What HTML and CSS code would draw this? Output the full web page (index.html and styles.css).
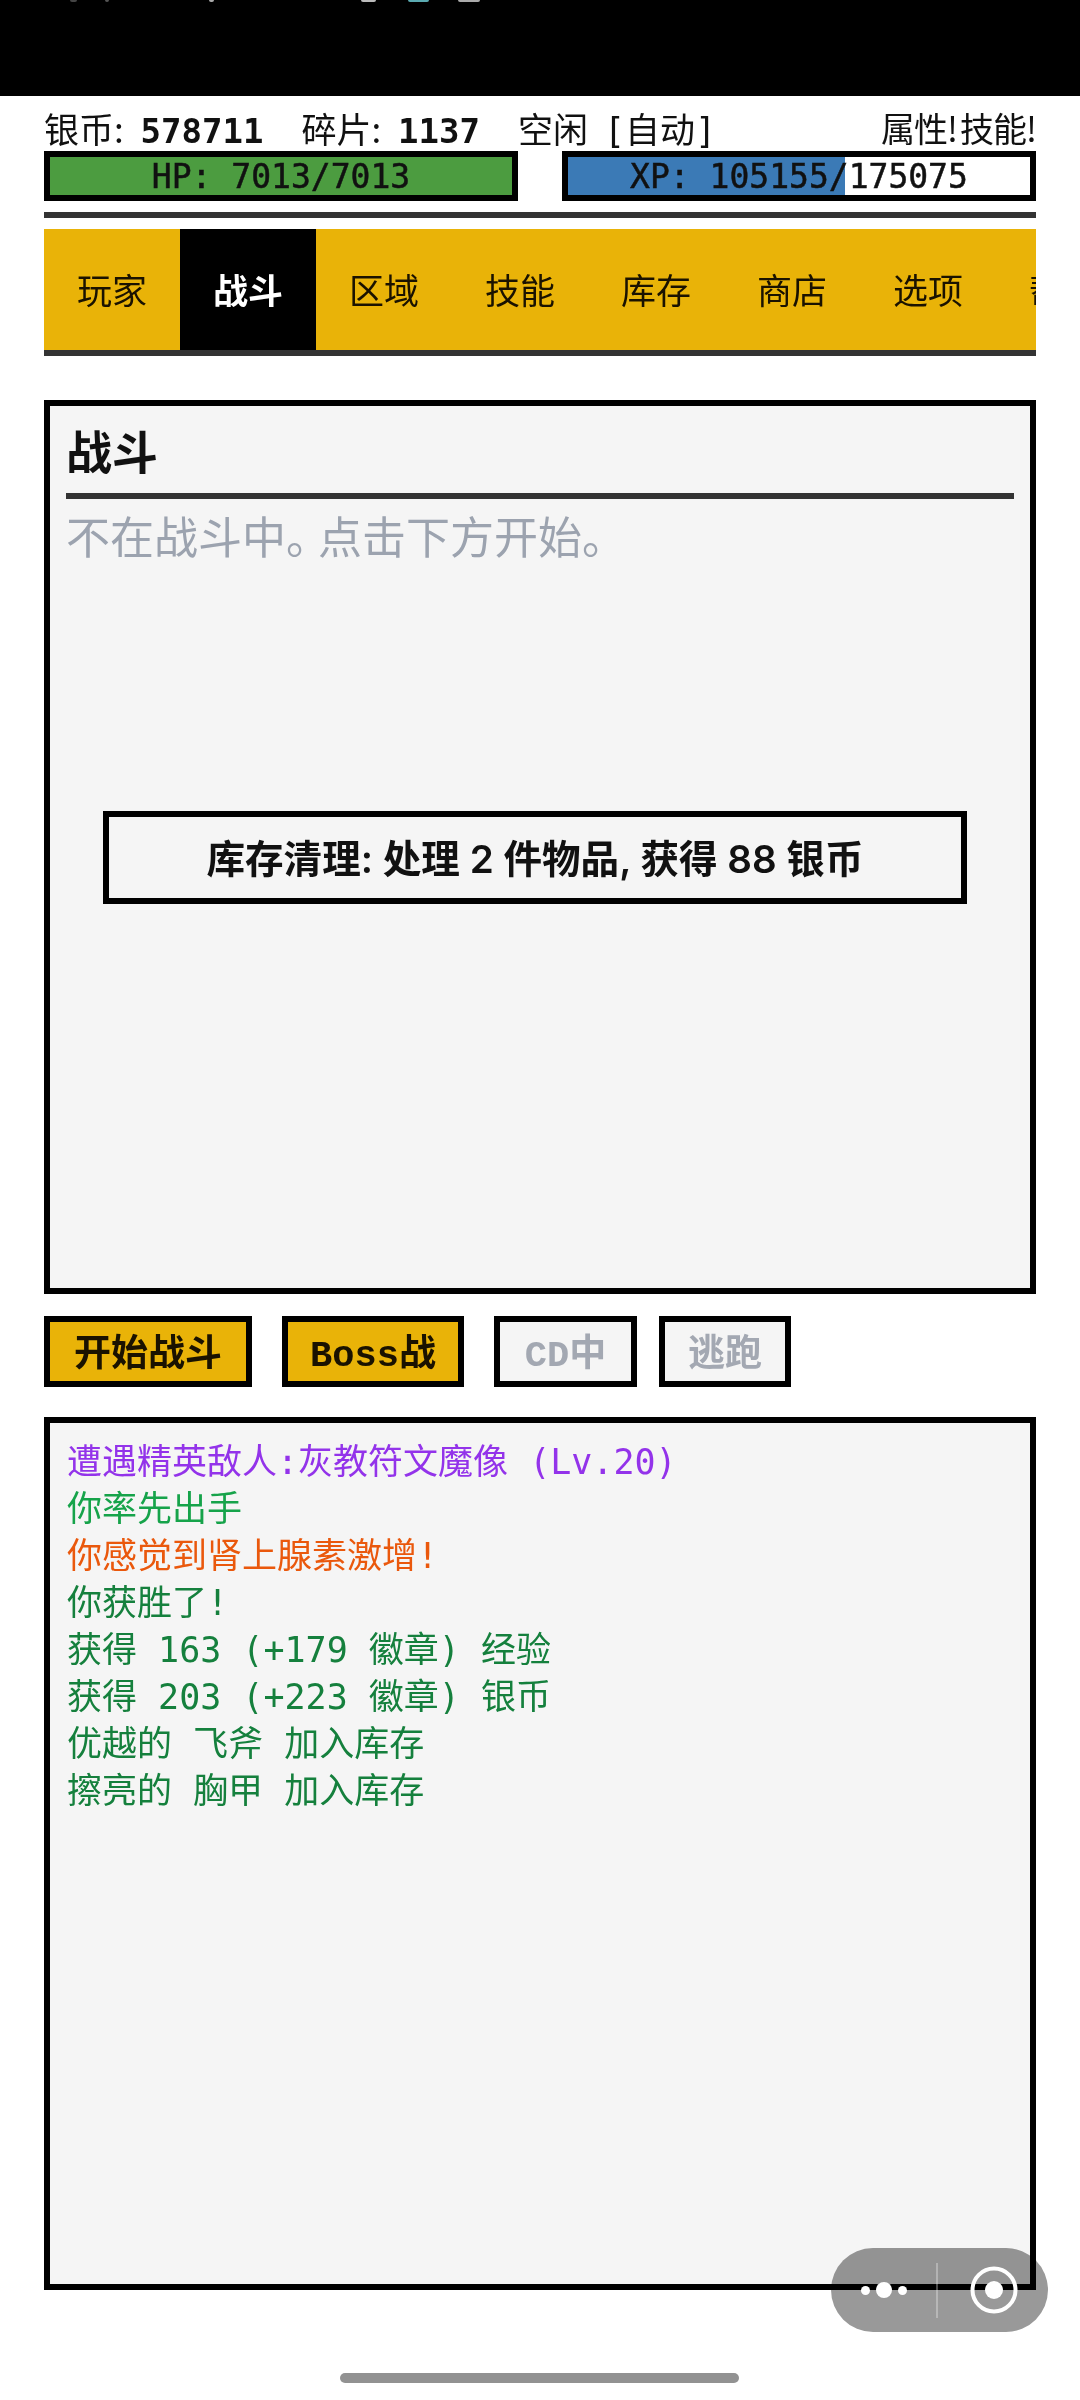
FILE: index.html
```html
<!DOCTYPE html>
<html lang="zh-CN">
<head>
<meta charset="utf-8">
<title>战斗</title>
<link rel="stylesheet" href="styles.css">
</head>
<body>
<div class="statusbar">
  <i class="speck s1"></i><i class="speck s2"></i><i class="speck s3"></i><i class="speck s4"></i><i class="speck s5"></i><i class="speck s6"></i>
</div>
<main class="page">
  <div class="stats">
    <div class="stats-left">
      <span class="stat">银币: <b>578711</b></span>
      <span class="stat">碎片: <b>1137</b></span>
      <span class="stat">空闲<span class="auto">[自动]</span></span>
    </div>
    <div class="stats-right"><span>属性!</span><span>技能!</span></div>
  </div>
  <div class="bars">
    <div class="bar bar-hp"><span>HP: 7013/7013</span></div>
    <div class="bar bar-xp"><i class="fill" style="width:60.06%"></i><span>XP: 105155/175075</span></div>
  </div>
  <nav class="tabs">
    <a class="tab">玩家</a>
    <a class="tab active">战斗</a>
    <a class="tab">区域</a>
    <a class="tab">技能</a>
    <a class="tab">库存</a>
    <a class="tab">商店</a>
    <a class="tab">选项</a>
    <a class="tab">帮助</a>
  </nav>
  <section class="panel battle">
    <h2 class="title">战斗</h2>
    <p class="idle">不在战斗中<span class="tight">。</span>点击下方开始。</p>
    <div class="toast">库存清理: 处理 2 件物品, 获得 88 银币</div>
  </section>
  <div class="actions">
    <button class="btn primary">开始战斗</button>
    <button class="btn primary">Boss战</button>
    <button class="btn off">CD中</button>
    <button class="btn off">逃跑</button>
  </div>
  <section class="panel log">
    <div class="purple">遭遇精英敌人:灰教符文魔像 (Lv.20)</div>
    <div class="green">你率先出手</div>
    <div class="orange">你感觉到肾上腺素激增!</div>
    <div class="green2">你获胜了!</div>
    <div class="green2">获得 163 (+179 徽章) 经验</div>
    <div class="green2">获得 203 (+223 徽章) 银币</div>
    <div class="green2">优越的 飞斧 加入库存</div>
    <div class="green2">擦亮的 胸甲 加入库存</div>
  </section>
</main>
<div class="capsule">
  <div class="dots"><i></i><i class="big"></i><i></i></div>
  <div class="divider"></div>
  <svg class="target" width="48" height="48" viewBox="0 0 48 48"><circle cx="24" cy="24" r="21.5" fill="none" stroke="#fff" stroke-width="4"/><circle cx="24" cy="24" r="9" fill="#fff"/></svg>
</div>
<div class="home"></div>
</body>
</html>
```
FILE: styles.css
```css
* { box-sizing: border-box; }
html, body { margin: 0; padding: 0; }
body {
  position: relative;
  width: 1080px;
  height: 2400px;
  overflow: hidden;
  background: #fff;
  color: #111;
  font-family: "DejaVu Sans Mono", "Noto Sans CJK SC", monospace;
  font-size: 35px;
}
.statusbar { position: relative; height: 96px; background: #000; }
.speck { position: absolute; top: 0; height: 2px; border-radius: 0 0 4px 4px; background: #8a8a8a; }
.s1 { left: 70px; width: 7px; background: #444; }
.s2 { left: 105px; width: 4px; background: #555; }
.s3 { left: 209px; width: 5px; background: #aaa; }
.s4 { left: 361px; width: 15px; background: #bbb; }
.s5 { left: 408px; width: 21px; background: #5aa9b0; }
.s6 { left: 458px; width: 22px; background: #aaa; }
.page { padding: 0 44px; }
.stats {
  display: flex;
  justify-content: space-between;
  height: 55px;
  padding-top: 10px;
  line-height: 44px;
  font-family: "Noto Sans CJK SC", sans-serif;
  font-size: 35px;
  white-space: nowrap;
}
.stats-left { display: flex; gap: 38px; }
.stat b {
  margin-left: 9px;
  font-family: "DejaVu Sans Mono", monospace;
  font-size: 34px;
  font-weight: 700;
}
.stats-right { display: flex; gap: 3px; font-size: 34px; letter-spacing: -1px; }
.auto { margin-left: 16px; font-family: "DejaVu Sans Mono", "Noto Sans CJK SC", monospace; }
.bars { display: flex; justify-content: space-between; }
.bar {
  position: relative;
  width: 474px;
  height: 50px;
  border: 6px solid #000;
  background: #fff;
  display: flex;
  align-items: center;
  justify-content: center;
  font-size: 33px;
  line-height: 1;
  -webkit-text-stroke: 0.5px #111;
}
.bar span { position: relative; }
.bar-hp { background: #4c9c40; }
.fill { position: absolute; left: 0; top: 0; bottom: 0; background: #3b7ab6; }
.tabs {
  display: flex;
  overflow: hidden;
  margin-top: 11px;
  padding-top: 11px;
  border-top: 6px solid #333;
  height: 144px;
  background: linear-gradient(#fff 11px, #e9b308 11px);
  border-bottom: 6px solid #333;
}
.tab {
  flex: 0 0 136px;
  display: flex;
  align-items: center;
  justify-content: center;
  padding-bottom: 3px;
  font-family: "Noto Sans CJK SC", sans-serif;
  font-size: 35px;
  color: #1a1200;
}
.tab.active { background: #000; color: #fff; font-weight: 700; }
.panel {
  border: 6px solid #000;
  background: #f5f5f5;
}
.battle {
  position: relative;
  height: 894px;
  margin-top: 44px;
  padding: 0 16px;
  font-family: "Noto Sans CJK SC", sans-serif;
}
.title {
  margin: 0;
  height: 93px;
  padding-top: 13px;
  border-bottom: 6px solid #333;
  font-size: 46px;
  line-height: 60px;
  font-weight: 700;
}
.idle { margin: 6px 0 0; font-size: 44px; line-height: 60px; color: #9ca3af; }
.tight { letter-spacing: -12px; }
.toast {
  position: absolute;
  left: 53px;
  top: 405px;
  width: 864px;
  height: 93px;
  padding-bottom: 3px;
  border: 6px solid #000;
  background: #f5f5f5;
  display: flex;
  align-items: center;
  justify-content: center;
  font-family: Inter, "Noto Sans CJK SC", sans-serif;
  font-size: 38.6px;
  font-weight: 600;
  white-space: nowrap;
}
.actions { display: flex; margin-top: 22px; }
.btn {
  height: 71px;
  border: 6px solid #000;
  padding: 0 0 3px;
  font-family: "Liberation Mono", "Noto Sans CJK SC", monospace;
  font-size: 37px;
  font-weight: 700;
  border-radius: 0;
  color: #1a1200;
}
.btn.primary { background: #e9b308; }
.btn.off { background: #f5f5f5; color: #a3a8b2; }
.btn:nth-child(1) { width: 208px; }
.btn:nth-child(2) { width: 182px; margin-left: 30px; }
.btn:nth-child(3) { width: 143px; margin-left: 30px; }
.btn:nth-child(4) { width: 132px; margin-left: 22px; }
.log {
  height: 873px;
  margin-top: 30px;
  padding: 16px 17px 0;
  line-height: 47px;
  font-size: 35px;
  white-space: nowrap;
}
.purple { color: #9333ea; }
.green { color: #16a34a; }
.orange { color: #ea580c; }
.green2 { color: #15803d; }
.capsule {
  position: absolute;
  left: 831px;
  top: 2248px;
  width: 217px;
  height: 84px;
  border-radius: 42px;
}
.capsule::before {
  content: "";
  position: absolute;
  inset: 0;
  border-radius: 42px;
  background: #999;
  mix-blend-mode: multiply;
}
.dots { position: absolute; left: 30px; top: 33px; display: flex; align-items: center; height: 18px; gap: 6px; }
.dots i { width: 9px; height: 9px; border-radius: 50%; background: #fff; display: block; }
.dots i.big { width: 16px; height: 16px; }
.divider { position: absolute; left: 105px; top: 15px; width: 2px; height: 55px; background: rgba(255,255,255,.3); }
.target { position: absolute; left: 139px; top: 18px; }
.home {
  position: absolute;
  left: 340px;
  top: 2373px;
  width: 399px;
  height: 10px;
  border-radius: 5px;
  background: #929292;
}
```
